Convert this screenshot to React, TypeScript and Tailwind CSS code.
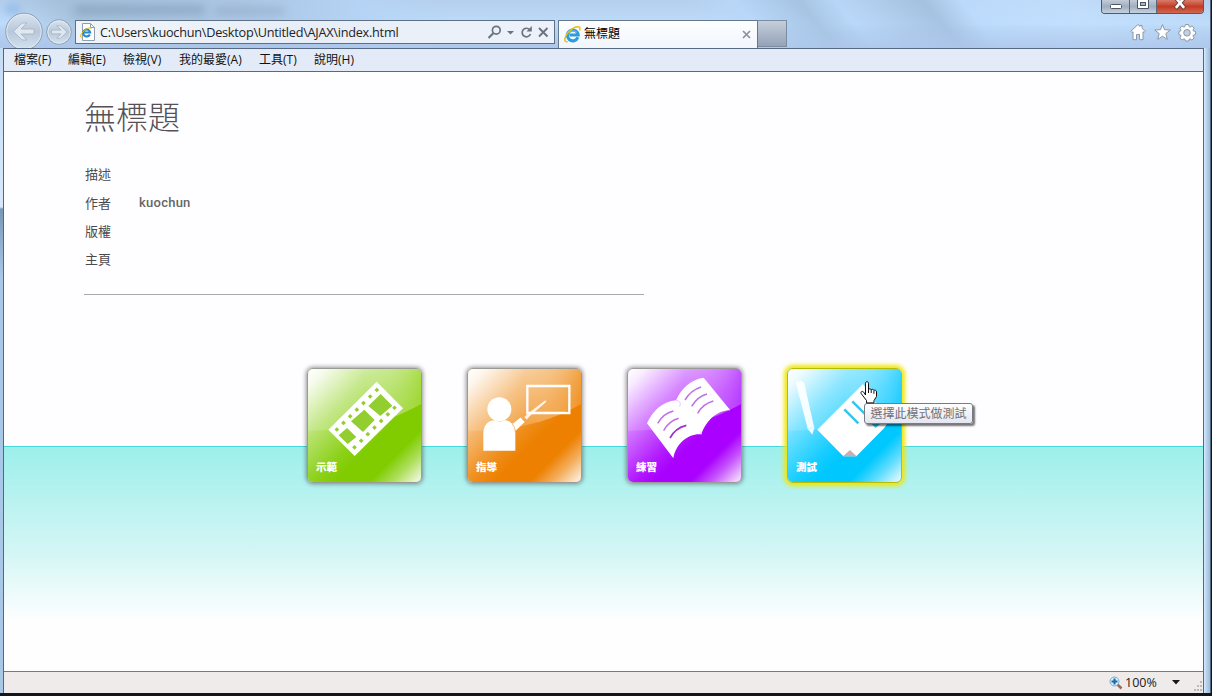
import React from "react";

const UI = "font-['Open_Sans','Noto_Sans_CJK_TC',sans-serif]";

const menus = [
  { zh: "檔案", key: "(F)", w: "w-[54px]" },
  { zh: "編輯", key: "(E)", w: "w-[55px]" },
  { zh: "檢視", key: "(V)", w: "w-[56px]" },
  { zh: "我的最愛", key: "(A)", w: "w-[80px]" },
  { zh: "工具", key: "(T)", w: "w-[55px]" },
  { zh: "說明", key: "(H)", w: "w-[60px]" },
];

function ELogo({ size }: { size: number }) {
  return (
    <svg width={size} height={size} viewBox="0 0 17 17" fill="none" className="shrink-0">
      <path d="M13.9 11.3A5.400 5.400 0 1 1 14.200 9H5.500" stroke="#2f9cdb" strokeWidth="3.100" />
      <path d="M5 7.4C6.2 4.6 10.4 3.8 13 6.5" stroke="#70c5ef" strokeWidth="1" />
      <path d="M3.7 15.8C-.8 16.5.2 11 4.5 6.1 9 .9 15.6-.9 16 2.1c.1.7-.1 1.4-.5 2.2" stroke="#e8bd18" strokeWidth="1.5" />
    </svg>
  );
}

function NavArrows() {
  return (
    <svg width="75" height="48" viewBox="0 0 75 48" fill="none" className="shrink-0">
      <defs>
        <linearGradient id="nav" x2="0" y2="1">
          <stop stopColor="#d9e4f0" />
          <stop offset=".5" stopColor="#b8c8da" />
          <stop offset="1" stopColor="#d5e3f1" />
        </linearGradient>
      </defs>
      <circle cx="24" cy="31.5" r="18.3" fill="url(#nav)" stroke="#8f9fb1" />
      <circle cx="24" cy="31.5" r="17.2" stroke="#e4edf6" strokeOpacity=".8" />
      <circle cx="59" cy="32" r="12.3" fill="url(#nav)" stroke="#8f9fb1" />
      <circle cx="59" cy="32" r="11.2" stroke="#e4edf6" strokeOpacity=".8" />
      <path d="M13.5 31.5 22 23h5l-6 6h13v5H21l6 6h-5z" fill="#dfe8f1" stroke="#a4b1c1" strokeWidth=".8" />
      <path d="m67 32-6.5-6.2h-3.8l4.4 4.3h-9.5v3.8h9.5l-4.4 4.3h3.8z" fill="#dfe8f1" stroke="#a4b1c1" strokeWidth=".8" />
    </svg>
  );
}

function WindowButtons() {
  return (
    <div className="flex h-[14px] w-[103px] overflow-hidden rounded-b-[4px] border border-t-0 border-[#4d5a6c]">
      <div className="flex w-[28px] justify-center border-r border-[#5c687a] bg-linear-to-b from-[#c2cbd8] via-[#a0aebf] to-[#c5d1df]">
        <svg width="14" height="13"><rect x="1.5" y="4.5" width="11" height="4" rx="1" fill="#fff" stroke="#4b5563" /></svg>
      </div>
      <div className="flex w-[27px] justify-center border-r border-[#5c687a] bg-linear-to-b from-[#c2cbd8] via-[#a0aebf] to-[#c5d1df]">
        <svg width="14" height="13" fill="none">
          <path d="M1.500-1v9.500h11V-1z" fill="#fff" stroke="#4b5563" />
          <rect x="4.500" y="2.500" width="5" height="3" fill="#a9b5c5" stroke="#4b5563" />
        </svg>
      </div>
      <div className="flex flex-1 justify-center bg-linear-to-b from-[#d87a68] via-[#c33b24] to-[#d06650]">
        <svg width="14" height="13">
          <path d="M3-2 11.500 8.500M11-2 2.500 8.500" stroke="#65403f" strokeWidth="4.4" />
          <path d="m3.400-1.500 7.700 9.300M10.600-1.500 2.900 7.800" stroke="#fff" strokeWidth="2.6" />
        </svg>
      </div>
    </div>
  );
}

function Toolbar() {
  return (
    <svg width="70" height="20" viewBox="1128 22 70 20" className="mr-[12px]" fill="#fff" stroke="#8d98a6" strokeWidth="1">
      <path d="m1138 24.5 2 1.9v-1h2v2.900l3.200 3-1.200 1.300-1-.9v8h-3.500v-5.200h-3v5.200h-3.500v-8l-1 .9-1.200-1.300z" />
      <path d="m1162.500 24.500 2 5.200 5.800.3-4.500 3.600 1.500 5.800-4.800-3.200-4.800 3.200 1.500-5.800-4.500-3.600 5.800-.3z" />
      <path d="M1185.400 24.500h3.200l.5 2.200 1 .4 1.900-1.200 2.200 2.200-1.200 1.900.4 1 2.200.5v3l-2.200.5-.4 1 1.200 1.900-2.200 2.200-1.900-1.200-1 .4-.5 1.700h-3.200l-.5-1.700-1-.4-1.900 1.200-2.200-2.200 1.200-1.900-.4-1-1.700-.5v-3l1.700-.5.4-1-1.200-1.900 2.200-2.200 1.900 1.200 1-.4z" />
      <circle cx="1187" cy="32.800" r="3.300" fill="#c0cfe2" />
    </svg>
  );
}

function BrowserHeader() {
  return (
    <header className="relative flex h-[48px] overflow-hidden bg-linear-to-b from-[#b5cfed] via-[#bddbfa] via-50% to-[#b2cbed]">
      <div className="absolute inset-0 bg-[linear-gradient(50deg,transparent_0_3%,#a0bbd4_8%,#a7c1df_22%,#b5d4f6_32%,transparent_38%_58%,#b8d8fb_62%,#a1bfdd_67%,#b8d8fb_70%,#afcceb_73%,#9fbcdb_77%,#bddcfe_80%,#c4e1ff_88%,transparent)] opacity-75" />
      <div className="absolute inset-x-0 bottom-0 h-[23px] bg-linear-to-b from-[#afcaea]/10 to-[#adc7eb]/80" />
      <div className="absolute top-[6px] left-[5px] h-[7px] w-[15px] bg-[#5d9ae1] opacity-50 blur-[4px]" />
      <div className="absolute top-[6px] left-[75px] h-[8px] w-[130px] bg-[#526a86] opacity-35 blur-[5px]" />
      <div className="absolute top-[8px] left-[215px] h-[6px] w-[70px] bg-[#526a86] opacity-25 blur-[4px]" />
      <div className="relative flex w-full">
        <NavArrows />
        <div className="mt-[20px] flex h-[24px] w-[480px] items-center border border-[#5e7085] bg-linear-to-r from-[#f0f5fb] via-[#e8eef7] to-[#edf2fa] pl-[4px]">
          <svg width="16" height="18" viewBox="0 0 16 18" fill="none">
            <path d="M2.500.5h8l4 4v13h-12z" fill="#fff" stroke="#939dab" />
            <path d="M10.500.5v4h4" stroke="#939dab" />
            <path d="M9.800 11.500a3.500 3.500 0 1 1 .3-2H4" stroke="#258acf" strokeWidth="2.200" />
            <path d="M2.500 14c-3 1-2.500-2.200.5-5.200 3-3.200 7.500-5 8.500-3" stroke="#e4b91c" />
          </svg>
          <span className={`ml-[4px] w-[386px] text-[12.700px] leading-[20px] tracking-[-0.250px] whitespace-nowrap text-[#202327] ${UI}`}>
            C:\Users\kuochun\Desktop\Untitled\AJAX\index.html
          </span>
          <svg width="64" height="20" viewBox="486 22 64 20" fill="none" stroke="#6a7480" strokeWidth="1.700">
            <circle cx="496.300" cy="30.200" r="3.900" />
            <path d="m493.500 33-5 5" strokeWidth="2.200" />
            <path d="M507 31h7l-3.500 3.500z" fill="#6a7480" stroke="none" />
            <path d="M529.500 29.500a4.300 4.300 0 1 0 1 4.500" />
            <path d="M531.800 26v5.500h-5.300z" fill="#6a7480" stroke="none" />
            <path d="m539 28 8.500 8.500m0-8.500-8.500 8.500" strokeWidth="1.900" />
          </svg>
        </div>
        <div className="mt-[20px] ml-[3px] flex h-[28px] w-[200px] items-center border border-b-0 border-[#66788f] bg-linear-to-b from-[#fdfeff] to-[#f1f6fd] pl-[5px]">
          <ELogo size={17} />
          <span className="mt-[-3px] ml-[3px] flex-1 font-['Noto_Sans_CJK_TC',sans-serif] text-[12px] leading-[20px] text-black">無標題</span>
          <svg width="9" height="9" className="mr-[6px]"><path d="m1 1 7 7M8 1 1 8" stroke="#8b929b" strokeWidth="1.700" /></svg>
        </div>
        <div className="mt-[20px] h-[27px] w-[29px] border border-l-0 border-[#7b8ba1] bg-linear-to-b from-[#c5cedb] to-[#95a3b7]" />
        <div className="ml-auto flex w-[110px] flex-col items-end">
          <div className="mr-[6px]"><WindowButtons /></div>
          <div className="mt-[8px]"><Toolbar /></div>
        </div>
      </div>
    </header>
  );
}

function Film() {
  const holes = Array.from({ length: 7 }, (_, i) => i);
  return (
    <g>
      <path d="M244 65 323 145 178 288 99 209z" fill="#fff" />
      <g fill="#93ce30">
        <path d="M256 102l35 35-36 31-36-30zM207 149l31 31-35 36-36-32zM155 204l28 27-26 21-27-26z" />
        {holes.map((i) => (
          <g key={i}>
            <rect x={119.5 + i * 20} y={203.5 - i * 19.8} width="10" height="10" transform={`rotate(-45 ${124.5 + i * 20} ${208.5 - i * 19.8})`} />
            <rect x={172.5 + i * 20} y={257 - i * 19.8} width="10" height="10" transform={`rotate(-45 ${177.5 + i * 20} ${262 - i * 19.8})`} />
          </g>
        ))}
      </g>
    </g>
  );
}

function Teacher() {
  return (
    <g fill="#fff">
      <circle cx="132" cy="148" r="36" />
      <path d="M84 272v-50c0-28 16-41 36-41 8 5 19 5 27 0 11 0 19 5 24 11l26-20 12 13-29 28v59z" />
      <path d="M171 192c6 8 9 15 9 25" fill="none" stroke="#ee962f" strokeWidth="2" />
      <path d="m205 165 12 12M196 172l12 13" stroke="#ed922b" strokeWidth="2" />
      <path d="m207 171 10-10 53-40 3 4-49 43-10 11z" fillOpacity=".85" />
      <path d="M216 78h126v81H216z" fill="none" stroke="#fff" strokeWidth="7" />
    </g>
  );
}

function Book() {
  return (
    <g>
      <path d="M174 295 95 190c17-38 48-66 87-69 15-35 43-62 83-68l80 98c-40 0-73 31-87 72-38-4-77 27-84 72z" fill="#fff" />
      <path d="M182 121c12 1 16 9 10 19M258 224l-3-10" stroke="#dcaaff" strokeWidth="2" fill="none" />
      <path d="M127 190q16-29 47-37M145 212q16-29 45-37M209 120q17-29 48-39M229 139q17-29 46-37M247 160q15-28 47-37" fill="none" stroke="#bb72e8" strokeWidth="4.500" />
      <path d="M164 234q16-30 49-38" fill="none" stroke="#9e32d0" strokeWidth="5" />
    </g>
  );
}

function Exam() {
  return (
    <g>
      <path d="m61 67 15-5 10 5 31 137-6 20-14-18z" fill="#fff" fillOpacity=".9" />
      <path d="m97 206 20-3" stroke="#bfeeff" strokeWidth="2" />
      <path d="M126 209 263 72l74 109q0 14-17 30l-77 78h-39z" fill="#fff" />
      <path d="m203 289 21-19 20 19z" fill="#c9aeb4" />
      <path d="m207 148 42 42M231 124l42 42M292 190h19l-10 9z" stroke="#35c5ea" strokeWidth="7.500" fill="#35a7de" />
    </g>
  );
}

const tiles = [
  { id: "demo", label: "示範", base: "#80cc00", light: "#a8db43", Icon: Film },
  { id: "guide", label: "指導", base: "#ed8000", light: "#f19b35", Icon: Teacher },
  { id: "practice", label: "練習", base: "#a900ff", light: "#bd4cff", Icon: Book },
  { id: "test", label: "測試", base: "#00c8ff", light: "#2dcfff", Icon: Exam },
];

function Tile({ id, label, base, light, Icon }: (typeof tiles)[number]) {
  const glow = id === "test"
    ? "border-[#b5bd00] shadow-[0_0_4px_3px_#efe60c]"
    : "border-[#9a9a96] shadow-[0_0_4px_1px_rgba(60,60,60,0.55)]";
  return (
    <button type="button" className={`relative h-[115px] w-[115px] overflow-visible rounded-[6px] border ${glow}`}>
      <svg className="block h-full w-full rounded-[5px]" viewBox="38 27 339 339">
        <defs>
          <linearGradient id={`${id}-shine`} x1="0" y1="0" x2="1" y2="1">
            <stop stopColor="#fff" />
            <stop offset=".08" stopColor="#fff" stopOpacity=".92" />
            <stop offset=".3" stopColor="#fff" stopOpacity=".45" />
            <stop offset=".52" stopColor="#fff" stopOpacity=".1" />
            <stop offset=".62" stopColor="#fff" stopOpacity="0" />
            <stop offset=".77" stopColor="#fff" stopOpacity="0" />
            <stop offset=".87" stopColor="#fff" stopOpacity=".35" />
            <stop offset=".98" stopColor="#fff" stopOpacity=".85" />
          </linearGradient>
          <linearGradient id={`${id}-fade`} x2="1" y2="0">
            <stop stopColor="#fff" stopOpacity=".13" />
            <stop offset=".5" stopColor="#fff" stopOpacity=".17" />
            <stop offset="1" stopColor={light} stopOpacity=".8" />
          </linearGradient>
        </defs>
        <path d="M38 27h339v339H38z" fill={base} />
        <path d="M38 27h339v105C300 175 207 212 38 212z" fill={`url(#${id}-fade)`} />
        <path d="M38 27h339v339H38z" fill={`url(#${id}-shine)`} />
        <Icon />
      </svg>
      <span className="absolute bottom-[8px] left-[8px] font-['Noto_Sans_CJK_TC',sans-serif] text-[10.500px] leading-[14px] font-black text-white">{label}</span>
    </button>
  );
}

function Tooltip() {
  return (
    <div className="absolute top-[331px] left-[860px] z-10 flex h-[21px] w-[109px] items-center justify-center rounded-[3px] border border-[#777b82] bg-linear-to-b from-white to-[#e4e5f0] pb-[2px] font-['Noto_Sans_CJK_TC',sans-serif] text-[12px] leading-[18px] whitespace-nowrap text-[#707176] shadow-[2px_2px_2px_rgba(0,0,0,0.55)]">
      選擇此模式做測試
    </div>
  );
}

function HandCursor() {
  return (
    <svg className="absolute top-[309px] left-[856px] z-20" width="18" height="23" viewBox="0 0 18 23">
      <path d="M5.500 14V2.200c0-2 3-2 3 0v6.300c.5-1 2.500-.8 2.700.3.800-.9 2.500-.5 2.700.6 1-.7 2.600 0 2.600 1.500v4.600L14 19.500v2.400H6.500v-2.400L1.200 12.600c-1-1.700 1-3 2.400-1.600z" fill="#fff" stroke="#111" />
      <path d="M8.500 8v4M11.200 9v3M13.900 9.800v3" stroke="#111" fill="none" />
    </svg>
  );
}

const details = [
  { label: "描述", value: "", h: "h-[29px]" },
  { label: "作者", value: "kuochun", h: "h-[29px]" },
  { label: "版權", value: "", h: "h-[28px]" },
  { label: "主頁", value: "", h: "h-[27px]" },
];

function PageContent() {
  return (
    <main className="relative h-[599px] bg-linear-to-b from-[#fefdff] to-[#fffeff]">
      <div className="absolute inset-x-0 top-[374px] h-[177px] border-t border-[#48d5da] bg-linear-to-b from-[#9cefeb] via-[#d3f6f5] via-60% to-[#fffeff]" />
      <div className="relative flex flex-col">
        <section className="ml-[80px] flex h-[223px] w-[560px] flex-col border-b border-[#a9a9ad] pt-[20px]">
          <h1 className="h-[67px] font-['Noto_Sans_CJK_TC',sans-serif] text-[32px] leading-[46px] font-light text-[#555154]">無標題</h1>
          {details.map((d) => (
            <div key={d.label} className={`flex items-center pl-[1px] text-[13px] leading-[20px] text-[#4b4b4e] ${d.h}`}>
              <span className="w-[54px] font-['Noto_Sans_CJK_TC',sans-serif]">{d.label}</span>
              <span className="font-['Roboto',sans-serif] font-medium tracking-[0.250px] text-[#666]">{d.value}</span>
            </div>
          ))}
        </section>
        <nav className="mt-[73px] ml-[303px] flex gap-[45px]">
          {tiles.map((t) => <Tile key={t.id} {...t} />)}
        </nav>
      </div>
      <Tooltip />
      <HandCursor />
    </main>
  );
}

function StatusBar() {
  return (
    <footer className="flex h-[22px] items-center justify-end border-t border-[#79797c] bg-[#efebeb]">
      <svg width="14" height="14" viewBox="0 0 14 14">
        <path d="m8.500 8.500 4 4" stroke="#996b56" strokeWidth="2.500" />
        <circle cx="5.500" cy="5.500" r="4.500" fill="#d9effb" stroke="#7caacb" />
        <path d="M5.500 2.500v6M2.500 5.500h6" stroke="#176ba8" strokeWidth="2" />
      </svg>
      <span className={`ml-[2px] w-[47px] text-[12.500px] leading-[18px] text-[#202020] ${UI}`}>100%</span>
      <svg width="8" height="5"><path d="M0 0h8L4 4.500z" fill="#171717" /></svg>
      <svg width="10" height="18" viewBox="0 0 10 18" className="ml-[13px]" fill="#bdb9b9">
        <path d="M7 7h2v2H7zM4 11h2v2H4zM7 11h2v2H7zM1 15h2v2H1zM4 15h2v2H4zM7 15h2v2H7z" />
      </svg>
    </footer>
  );
}

export default function App() {
  return (
    <div className="flex h-[696px] w-[1212px] flex-col overflow-hidden bg-[#15161d]">
      <div className="h-[693px] w-[1211px] border-r border-[#52657c] bg-[#c4d9f1]">
        <BrowserHeader />
        <div className="flex h-[645px]">
          <div className="w-[3px] bg-[linear-gradient(to_bottom,#c6dcf5_0,#d7e8fa_159px,#7898b8_161px,#a9c8e7_230px,#a9c8e7)]" />
          <div className="w-[1201px] border-x border-[#53677f]">
            <div className={`flex h-[24px] items-center border-y border-[#566b83] bg-[#e3ebf8] pl-[10px] text-[12px] text-[#111] ${UI}`}>
              {menus.map((m) => (
                <span key={m.key} className={`-mt-[1px] shrink-0 leading-[20px] whitespace-nowrap ${m.w}`}>
                  <span className="font-['Noto_Sans_CJK_TC',sans-serif]">{m.zh}</span>{m.key}
                </span>
              ))}
            </div>
            <PageContent />
            <StatusBar />
          </div>
          <div className="w-[6px] bg-[linear-gradient(to_right,#d8eaff,#b6d1ed_45%,#9dbddc)]" />
        </div>
      </div>
    </div>
  );
}
